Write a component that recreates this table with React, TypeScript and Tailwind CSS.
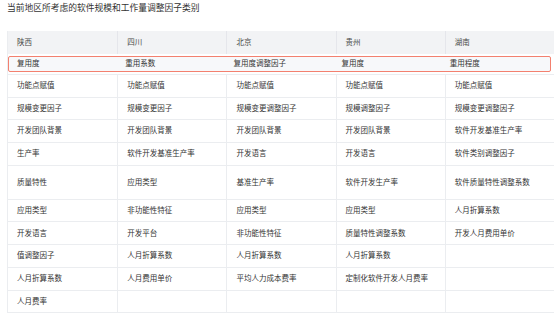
const HEADERS = ["陕西", "四川", "北京", "贵州", "湖南"];

const HIGHLIGHT = ["复用度", "重用系数", "复用度调整因子", "复用度", "重用程度"];

const ROWS: Array<{ cells: string[]; tall?: boolean }> = [
  { cells: ["功能点赋值", "功能点赋值", "功能点赋值", "功能点赋值", "功能点赋值"] },
  { cells: ["规模变更因子", "规模变更因子", "规模变更调整因子", "规模调整因子", "规模变更调整因子"] },
  { cells: ["开发团队背景", "开发团队背景", "开发团队背景", "开发团队背景", "软件开发基准生产率"] },
  { cells: ["生产率", "软件开发基准生产率", "开发语言", "开发语言", "软件类别调整因子"] },
  { cells: ["质量特性", "应用类型", "基准生产率", "软件开发生产率", "软件质量特性调整系数"], tall: true },
  { cells: ["应用类型", "非功能性特征", "应用类型", "应用类型", "人月折算系数"] },
  { cells: ["开发语言", "开发平台", "非功能性特征", "质量特性调整系数", "开发人月费用单价"] },
  { cells: ["值调整因子", "人月折算系数", "人月折算系数", "人月折算系数", ""] },
  { cells: ["人月折算系数", "人月费用单价", "平均人力成本费率", "定制化软件开发人月费率", ""] },
  { cells: ["人月费率", "", "", "", ""] },
];

export default function App() {
  return (
    <div
      className="h-[313px] w-[554px] overflow-hidden bg-white pl-[7px] text-[#333]"
      style={{ fontFamily: '"Noto Sans", "Noto Sans CJK SC", sans-serif' }}
    >
      <div className="flex h-[15px] items-center pt-[1px] text-[8.75px] leading-none text-[#333]">
        当前地区所考虑的软件规模和工作量调整因子类别
      </div>

      <div className="mt-[16px] w-[547px] border-b border-l border-[#ebedf0] text-[7.5px] leading-none">
        <div className="grid h-[23px] grid-cols-5 bg-[#f2f3f5]">
          {HEADERS.map((h, i) => (
            <div
              key={h}
              className={`flex items-center pl-[9px] text-[#4a4a4a] ${i > 0 ? "border-l border-[#e5e6eb]" : ""}`}
            >
              {h}
            </div>
          ))}
        </div>

        <div className="pb-[2px] pt-[2px]">
          <div className="mr-[3px] grid h-[16px] grid-cols-5 rounded-[2px] border-[1.5px] border-[#f3806f] bg-[#f7f8fa]">
            {HIGHLIGHT.map((c, i) => (
              <div key={i} className="flex items-center pl-[8px]">
                {c}
              </div>
            ))}
          </div>
        </div>

        {ROWS.map((row, r) => (
          <div
            key={r}
            className={`grid grid-cols-5 border-t border-[#ebedf0] ${row.tall ? "h-[34px]" : "h-[22.7px]"}`}
          >
            {row.cells.map((c, i) => (
              <div
                key={i}
                className={`flex items-center pl-[9px] ${i > 0 ? "border-l border-[#ebedf0]" : ""}`}
              >
                {c}
              </div>
            ))}
          </div>
        ))}
      </div>
    </div>
  );
}
